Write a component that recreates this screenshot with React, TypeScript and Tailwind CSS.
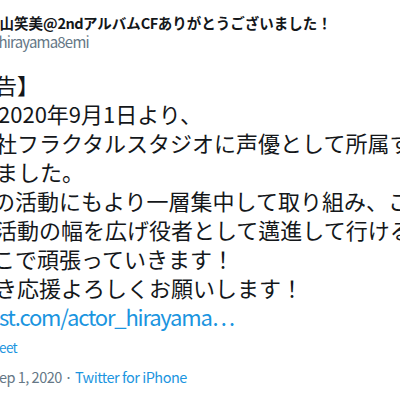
import React from "react";

const F = { fontFamily: '"Noto Sans CJK JP", "Noto Sans", sans-serif' };

export default function App() {
  return (
    <div
      className="w-[400px] h-[400px] overflow-hidden bg-white text-[#14171a]"
      style={F}
    >
      <div className="flex flex-col pt-[14px]">
        <div className="whitespace-nowrap text-[14.5px] leading-[18px] font-bold ml-[-15px]">
          平山笑美@<span className="tracking-[-0.6px]">2nd</span>アルバム
          <span className="tracking-[-0.6px]">CF</span>ありがとうございました！
        </div>
        <div className="mt-[1px] whitespace-nowrap text-[15px] leading-[18px] text-[#657786] ml-[-15px] tracking-[-0.8px]">
          @hirayama8emi
        </div>
      </div>

      <div className="flex flex-col mt-[19px] text-[22px] leading-[29px] whitespace-nowrap">
        <div className="ml-[-5px]">告】</div>
        <div className="ml-[-2px]">2020年9月1日より、</div>
        <div className="ml-[-5px]">社フラクタルスタジオに声優として所属することになり</div>
        <div className="ml-[-4px]">ました。</div>
        <div className="ml-[-7px]">の活動にもより一層集中して取り組み、これからも</div>
        <div className="ml-[-5px]">活動の幅を広げ役者として邁進して行けるよう</div>
        <div className="ml-[-7px]">こで頑張っていきます！</div>
        <div className="ml-[-5px]">き応援よろしくお願いします！</div>
        <div className="ml-[-1px] text-[#1b95e0] tracking-[-1.2px]">st.com/actor_hirayama…</div>
      </div>

      <div className="mt-[6px] ml-[-1px] whitespace-nowrap text-[13.5px] leading-[20px] text-[#1b95e0] tracking-[-0.6px]">
        eet
      </div>

      <div className="mt-[10px] ml-[-1px] whitespace-nowrap text-[14.5px] leading-[20px] text-[#657786] tracking-[-0.5px]">
        ep 1, 2020 · <span className="text-[#1b95e0]">Twitter for iPhone</span>
      </div>
    </div>
  );
}
